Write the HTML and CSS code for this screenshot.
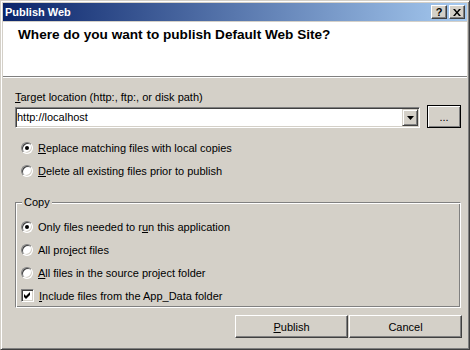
FILE: index.html
```html
<!DOCTYPE html>
<html lang="en">
<head>
    <meta charset="UTF-8">
    <meta name="viewport" content="width=device-width, initial-scale=1.0">
    <title>Publish Web</title>
    <link rel="stylesheet" href="styles.css">
</head>
<body>
    <div class="window">
        <div class="titlebar">
            <span class="title">Publish Web</span>
            <div class="caption-buttons">
                <span class="cap-btn">?</span>
                <span class="cap-btn">
                    <svg width="8" height="7" viewBox="0 0 8 7"><path d="M0 0h2l2 2.5L6 0h2L5 3.5 8 7H6L4 4.5 2 7H0l3-3.5z" fill="#000"/></svg>
                </span>
            </div>
        </div>

        <div class="header">
            <h1>Where do you want to publish Default Web Site?</h1>
        </div>

        <div class="content">
            <div class="field-label"><u>T</u>arget location (http:, ftp:, or disk path)</div>
            <div class="location-row">
                <div class="combo">
                    <span class="combo-text">http://localhost</span>
                    <span class="combo-btn">
                        <svg width="7" height="4" viewBox="0 0 7 4"><path d="M0 0h7L3.5 4z" fill="#000"/></svg>
                    </span>
                </div>
                <button class="btn browse-button">...</button>
            </div>

            <div class="options">
                <div class="option"><span class="radio checked"></span><span><u>R</u>eplace matching files with local copies</span></div>
                <div class="option"><span class="radio"></span><span><u>D</u>elete all existing files prior to publish</span></div>
            </div>

            <div class="group">
                <div class="group-title">Copy</div>
                <div class="option"><span class="radio checked"></span><span>Only files needed to r<u>u</u>n this application</span></div>
                <div class="option"><span class="radio"></span><span>All pro<u>j</u>ect files</span></div>
                <div class="option"><span class="radio"></span><span><u>A</u>ll files in the source project folder</span></div>
                <div class="option">
                    <span class="checkbox">
                        <svg width="7" height="7" viewBox="0 0 7 7"><path d="M0 2l2 2 4-4v3L2 7 0 5z" fill="#000"/></svg>
                    </span>
                    <span><u>I</u>nclude files from the App_Data folder</span>
                </div>
            </div>

            <div class="actions">
                <button class="btn action-button"><u>P</u>ublish</button>
                <button class="btn action-button">Cancel</button>
            </div>
        </div>
    </div>
</body>
</html>
```

FILE: styles.css
```css
body {
    margin: 0;
    font-family: "Liberation Sans", Arial, sans-serif;
    font-size: 11px;
    color: #000;
    background: #d4d0c8;
}
u {
    text-decoration-skip-ink: none;
}
.window {
    width: 470px;
    height: 350px;
    box-sizing: border-box;
    background: #d4d0c8;
    border: 1px solid;
    border-color: #d4d0c8 #404040 #404040 #d4d0c8;
    box-shadow: inset 1px 1px #fff, inset -1px -1px #808080;
    padding: 2px;
    display: flex;
    flex-direction: column;
}
.titlebar {
    height: 18px;
    flex-shrink: 0;
    display: flex;
    align-items: center;
    padding: 0 2px;
    background: linear-gradient(to right, #0a246a, #a6caf0);
    color: #fff;
    font-weight: bold;
}
.title {
    flex: 1;
}
.caption-buttons {
    display: flex;
    gap: 2px;
}
.cap-btn {
    width: 16px;
    height: 14px;
    box-sizing: border-box;
    border: 1px solid;
    border-color: #fff #404040 #404040 #fff;
    box-shadow: inset -1px -1px #808080;
    background: #d4d0c8;
    display: flex;
    align-items: center;
    justify-content: center;
    color: #000;
    font-weight: bold;
    line-height: 12px;
}
.header {
    margin-top: 1px;
    height: 55px;
    flex-shrink: 0;
    box-sizing: border-box;
    background: #fff;
    border-bottom: 1px solid #808080;
    box-shadow: 0 1px #fff;
    padding: 5px 15px 0;
}
.header h1 {
    margin: 0;
    font-size: 13.6px;
    line-height: 16px;
    font-weight: bold;
}
.content {
    flex: 1;
    padding: 14px 6px 0 12px;
    display: flex;
    flex-direction: column;
}
.field-label {
    line-height: 13px;
}
.location-row {
    display: flex;
    align-items: flex-end;
    gap: 7px;
    margin-top: 1px;
}
.combo {
    flex: 1;
    height: 21px;
    box-sizing: border-box;
    display: flex;
    padding: 1px;
    background: #fff;
    border: 1px solid;
    border-color: #808080 #fff #fff #808080;
    box-shadow: inset 1px 1px #404040, inset -1px -1px #d4d0c8;
}
.combo-text {
    flex: 1;
    line-height: 17px;
}
.combo-btn {
    width: 16px;
    height: 17px;
    box-sizing: border-box;
    background: #d4d0c8;
    border: 1px solid;
    border-color: #d4d0c8 #404040 #404040 #d4d0c8;
    box-shadow: inset 1px 1px #fff, inset -1px -1px #808080;
    display: flex;
    align-items: center;
    justify-content: center;
}
.btn {
    font-family: inherit;
    font-size: 11px;
    color: #000;
    background: #d4d0c8;
    padding: 0;
    margin: 0;
    border: 1px solid;
    border-color: #fff #404040 #404040 #fff;
    box-shadow: inset -1px -1px #808080;
}
.browse-button {
    width: 34px;
    height: 23px;
    border-color: #000;
    box-shadow: inset 1px 1px #fff, inset -1px -1px #808080;
}
.options {
    margin-top: 8px;
}
.option {
    height: 23px;
    display: flex;
    align-items: center;
    gap: 5px;
    padding-left: 6px;
}
.radio {
    width: 12px;
    height: 12px;
    box-sizing: border-box;
    flex-shrink: 0;
    border-radius: 50%;
    border: 1px solid;
    border-color: #808080 #fff #fff #808080;
    box-shadow: inset 1px 1px #404040, inset -1px -1px #d4d0c8;
    background: #fff;
    display: flex;
    align-items: center;
    justify-content: center;
}
.radio.checked::after {
    content: "";
    width: 4px;
    height: 4px;
    border-radius: 50%;
    background: #000;
}
.checkbox {
    width: 13px;
    height: 13px;
    box-sizing: border-box;
    flex-shrink: 0;
    border: 1px solid;
    border-color: #808080 #fff #fff #808080;
    box-shadow: inset 1px 1px #404040, inset -1px -1px #d4d0c8;
    background: #fff;
    display: flex;
    align-items: center;
    justify-content: center;
}
.group {
    margin-top: 20px;
    padding-left: 5px;
    border: 1px solid;
    border-color: #808080 #fff #fff #808080;
    box-shadow: inset 1px 1px #fff, inset -1px -1px #808080;
}
.group .option {
    padding-left: 0;
}
.group-title {
    display: table;
    margin: -7px 0 6px 1px;
    padding: 0 2px;
    line-height: 13px;
    background: #d4d0c8;
}
.actions {
    margin-top: 7px;
    margin-right: -1px;
    display: flex;
    justify-content: flex-end;
    gap: 1px;
}
.action-button {
    width: 113px;
    height: 23px;
}
```
